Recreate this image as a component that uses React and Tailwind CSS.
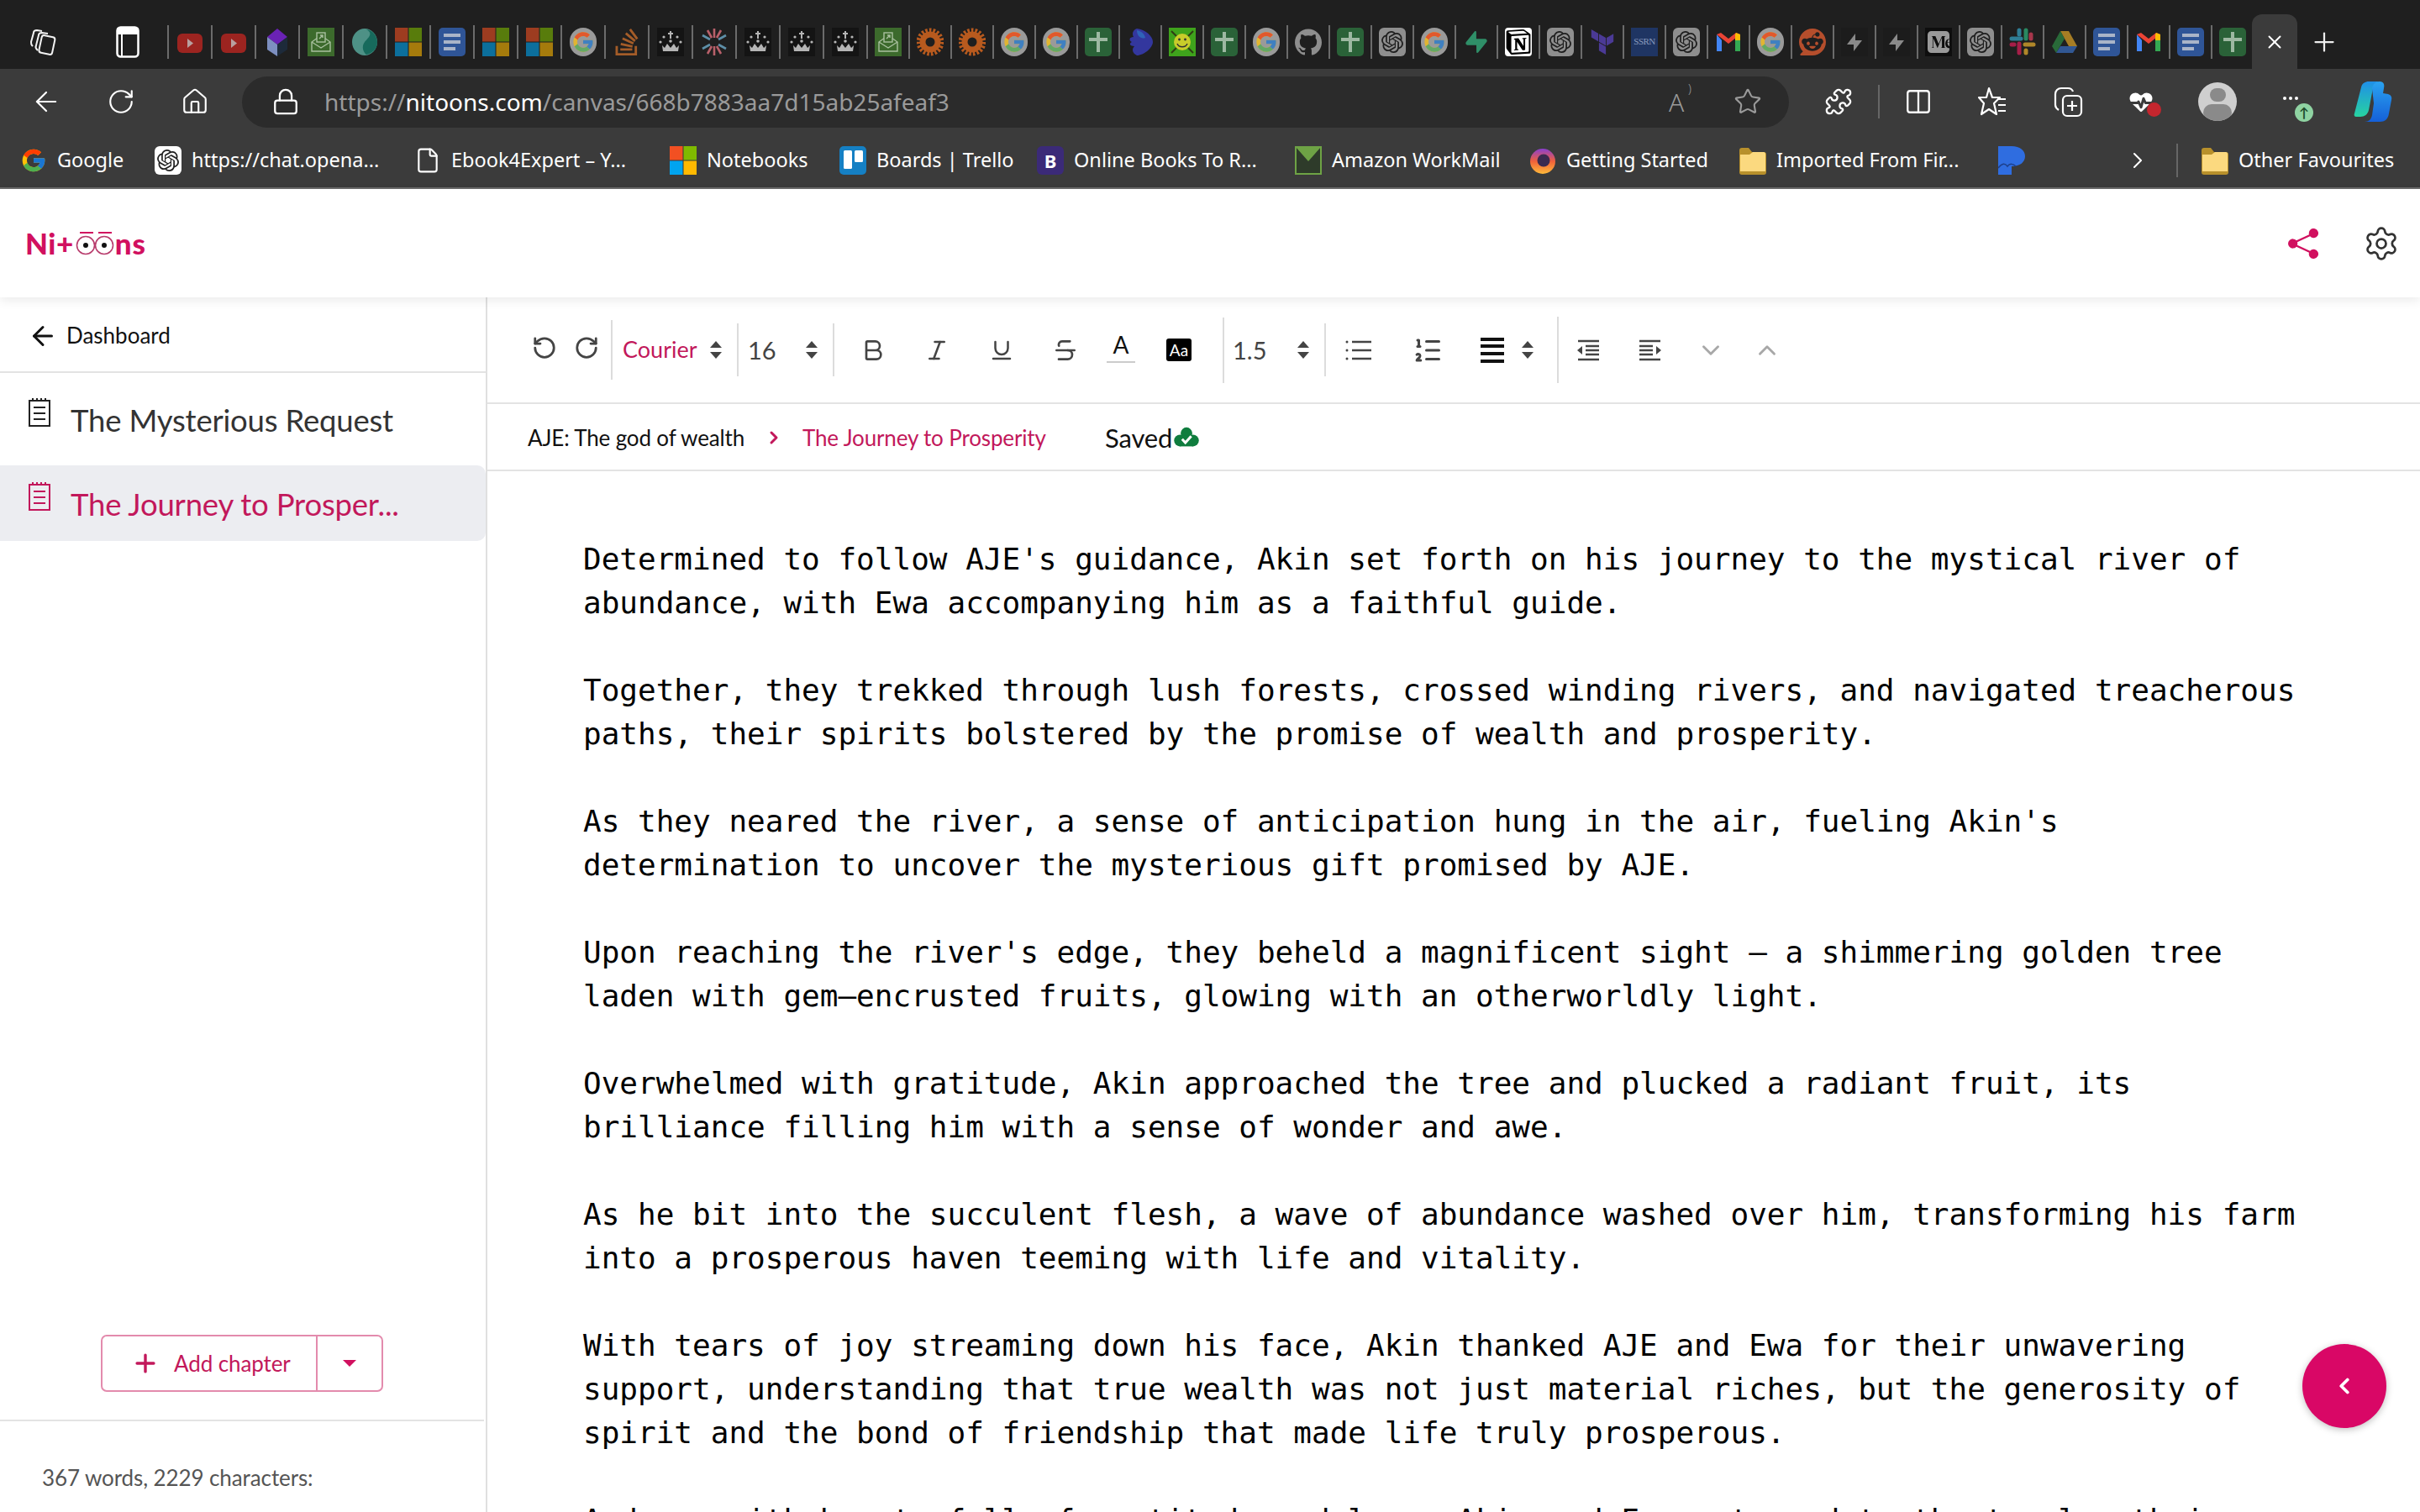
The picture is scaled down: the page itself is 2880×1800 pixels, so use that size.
import React from 'react';
import { ArrowLeft, RotateCw, RotateCcw, House, Lock, Star, Puzzle, Columns2, HeartPulse, ChevronRight, ChevronLeft, ChevronDown, ChevronUp, Bold, Italic, Underline, Strikethrough, Settings, Plus, X, File, ListOrdered } from 'lucide-react';
import { FcGoogle } from 'react-icons/fc';
import { BsShareFill } from 'react-icons/bs';
import { SiOpenai, SiNotion, SiGithub, SiMedium, SiTerraform, SiStackoverflow, SiSupabase, SiReddit } from 'react-icons/si';

const MsGrid = ({ cls = 'w-8 h-[34px]', dim }) => (
  <svg viewBox="0 0 32 34" className={`${cls} ${dim ? 'opacity-60' : ''}`}>
    <rect x="0" y="0" width="15.5" height="16.5" fill="#f25022" />
    <rect x="16.5" y="0" width="15.5" height="16.5" fill="#7fba00" />
    <rect x="0" y="17.5" width="15.5" height="16.5" fill="#00a4ef" />
    <rect x="16.5" y="17.5" width="15.5" height="16.5" fill="#ffb900" />
  </svg>
);

const Docs = () => (
  <svg viewBox="0 0 32 34" className="w-8 h-[34px]">
    <rect width="32" height="34" rx="5" fill="#2f5597" />
    <rect x="6" y="7" width="20" height="4" fill="#a9b4c8" />
    <rect x="6" y="15" width="20" height="4" fill="#a9b4c8" />
    <rect x="6" y="23" width="14" height="4" fill="#a9b4c8" />
  </svg>
);

const Sheets = () => (
  <svg viewBox="0 0 32 34" className="w-8 h-[34px]">
    <rect width="32" height="34" rx="5" fill="#2a6238" />
    <rect x="5" y="12" width="22" height="4" fill="#9db8a2" />
    <rect x="14" y="5" width="4" height="24" fill="#9db8a2" />
  </svg>
);

const MailGreen = () => (
  <svg viewBox="0 0 32 34" className="w-8 h-[34px]">
    <rect width="32" height="34" fill="#3c6a2c" />
    <g fill="none" stroke="#a9c09f" strokeWidth="1.4">
      <path d="M5 17v11h22V17l-11-8z" />
      <path d="M5 17l11 7 11-7" />
      <rect x="11" y="6" width="10" height="11" fill="#3c6a2c" />
      <path d="M14 13l4-4m-3 0h3v3" />
    </g>
  </svg>
);

const Crown = () => (
  <svg viewBox="0 0 32 34" className="w-8 h-[34px]">
    <rect width="32" height="34" fill="#141414" />
    <g fill="#b5b5b5">
      <rect x="15" y="4" width="2" height="9" />
      <rect x="13" y="6" width="6" height="2" />
      <circle cx="8" cy="11" r="1.6" />
      <circle cx="24" cy="11" r="1.6" />
      <circle cx="4" cy="17" r="1.6" />
      <circle cx="28" cy="17" r="1.6" />
      <circle cx="16" cy="16" r="1.8" />
      <path d="M6 21l3 3 3-5 4 5 4-5 3 5 3-3-1 7H7z" />
    </g>
  </svg>
);

const Sun = () => (
  <svg viewBox="0 0 32 34" className="w-8 h-[34px]">
    <circle cx="16" cy="17" r="9" fill="none" stroke="#b85a1e" strokeWidth="7" />
    <circle cx="16" cy="17" r="14" fill="none" stroke="#b85a1e" strokeWidth="5" strokeDasharray="2.6 2" />
  </svg>
);

const Asterisk = () => (
  <svg viewBox="0 0 32 34" className="w-8 h-[34px]" strokeWidth="2.6" fill="none">
    <path d="M16 1v11M16 22v11" stroke="#b8606a" />
    <path d="M2 9l9 5M21 20l9 5" stroke="#5e8fa8" />
    <path d="M30 9l-9 5M11 20l-9 5" stroke="#5e8fa8" />
    <path d="M8 3l5 9M19 22l5 9" stroke="#b8606a" />
    <path d="M24 3l-5 9M13 22l-5 9" stroke="#b8606a" />
  </svg>
);

const Smiley = () => (
  <svg viewBox="0 0 32 34" className="w-8 h-[34px]">
    <rect width="32" height="34" fill="#3fa31c" />
    <path d="M3 4l26 26M29 4L3 30" stroke="#2f3d14" strokeWidth="2" />
    <circle cx="16" cy="17" r="10" fill="#c8cc2a" />
    <circle cx="12.5" cy="14" r="1.4" fill="#333" />
    <circle cx="19.5" cy="14" r="1.4" fill="#333" />
    <path d="M10 19c2 5 10 5 12 0" stroke="#333" strokeWidth="1.5" fill="none" />
  </svg>
);

const Gmail = () => (
  <svg viewBox="0 0 32 34" className="w-8 h-[34px]">
    <path d="M2 8v20h6V15z" fill="#4285f4" />
    <path d="M30 8v20h-6V15z" fill="#34a853" />
    <path d="M2 8l14 11L30 8l-5-2-9 7-9-7z" fill="#ea4335" />
    <path d="M25 6l5 2v7l-6 0V8z" fill="#fbbc04" />
  </svg>
);

const Drive = () => (
  <svg viewBox="0 0 32 34" className="w-8 h-[34px] opacity-70">
    <path d="M11 4h10l10 18H21z" fill="#e0a527" />
    <path d="M11 4L1 22l5 8L16 13z" fill="#2e8b45" />
    <path d="M6 30h20l5-8H11z" fill="#3a6fc4" />
  </svg>
);

const Slack = () => (
  <svg viewBox="0 0 32 34" className="w-8 h-[34px] opacity-70" strokeWidth="5" strokeLinecap="round" fill="none">
    <path d="M3 13h11" stroke="#36a7c9" />
    <path d="M12 3v5" stroke="#36a7c9" />
    <path d="M20 3v10" stroke="#2eb67d" />
    <path d="M26 8v5" stroke="#e0405e" />
    <path d="M19 20h10" stroke="#ecb22e" />
    <path d="M20 27v3" stroke="#ecb22e" />
    <path d="M12 19v11" stroke="#e01e5a" />
    <path d="M3 20h3" stroke="#e01e5a" />
  </svg>
);

const Gem = () => (
  <svg viewBox="0 0 32 34" className="w-8 h-[34px]">
    <path d="M16 1l12 10-12 9L4 11z" fill="#6a22b5" />
    <path d="M4 11l12 9v14L4 26z" fill="#7d8fc0" />
    <path d="M28 11l-12 9v14l12-8z" fill="#1d2a3a" />
  </svg>
);

const Orb = () => (
  <svg viewBox="0 0 32 34" className="w-8 h-[34px]">
    <ellipse cx="16" cy="17" rx="15" ry="16" fill="#4e9186" />
    <path d="M18 2c9 5 2 10-2 15s-2 12 2 15c10-2 13-10 13-15S27 3 18 2z" fill="#176a5c" />
  </svg>
);

const Fish = () => (
  <svg viewBox="0 0 32 34" className="w-8 h-[34px]">
    <path d="M12 1c10 1 19 9 19 16S20 33 12 33C6 30 6 25 9 22 4 22 2 19 6 17 2 15 3 11 8 11 6 7 7 3 12 1z" fill="#33379e" />
    <path d="M12 3c5 1 9 4 10 9-5 2-10-2-10-9z" fill="#2f63b8" />
  </svg>
);

const Ssrn = () => (
  <div className="w-8 h-[34px] bg-[#1f3563] flex items-center justify-center text-[11px] text-[#8a9bbd] font-['Liberation_Serif',serif] leading-none tracking-tighter">SSRN</div>
);

const Youtube = () => (
  <svg viewBox="0 0 32 34" className="w-8 h-[34px]">
    <rect x="1" y="7" width="30" height="23" rx="6" fill="#9c2420" />
    <path d="M13 13l7 5.500-7 5.500z" fill="#b9a0a0" />
  </svg>
);

const Bolt = ({ color = '#8a8a8a' }) => (
  <svg viewBox="0 0 32 34" className="w-8 h-[34px]">
    <path d="M17 7L7 20h8v2l0 6 10-13h-8z" fill={color} />
  </svg>
);

const Grey = ({ children }) => (
  <div className="w-8 h-[34px] rounded-md bg-[#8e8e8e] text-[#1f1f1f] flex items-center justify-center">{children}</div>
);

const OpenAi = () => <Grey><SiOpenai size={26} /></Grey>;
const GoogleDim = () => (
  <div className="w-8 h-[34px] rounded-full bg-[#9a9a9a] flex items-center justify-center"><FcGoogle size={28} className="opacity-70" /></div>
);
const Github = () => <SiGithub size={32} className="text-[#8e8e8e]" />;
const Notion = () => (
  <div className="w-8 h-[34px] bg-white rounded-sm flex items-center justify-center text-black"><SiNotion size={30} /></div>
);
const Stack = () => <SiStackoverflow size={32} className="text-[#a45c28]" />;
const Supa = () => <SiSupabase size={26} className="text-[#2f8f68]" />;
const Terra = () => <SiTerraform size={30} className="text-[#4b3a96]" />;
const Reddit = () => <SiReddit size={32} className="text-[#b54e2c]" />;
const Medium = () => (
  <div className="w-8 h-[34px] bg-[#0e0e0e] flex items-center justify-center text-[#9a9a9a]"><SiMedium size={26} /></div>
);
const BoltBox = () => (
  <div className="w-8 h-[34px] bg-[#1c1c1c]"><Bolt /></div>
);

const TAB_ICONS = [
  Youtube, Youtube, Gem, MailGreen, Orb, () => <MsGrid dim />, Docs, () => <MsGrid dim />, () => <MsGrid dim />, GoogleDim,
  Stack, Crown, Asterisk, Crown, Crown, Crown,
];
const TAB_ICONS_NARROW = [
  MailGreen, Sun, Sun, GoogleDim, GoogleDim, Sheets, Fish, Smiley, Sheets, GoogleDim, Github, Sheets, OpenAi, GoogleDim,
  Supa, Notion, OpenAi, Terra, Ssrn, OpenAi, Gmail, GoogleDim, Reddit, BoltBox, BoltBox, Medium, OpenAi, Slack, Drive,
  Docs, Gmail, Docs, Sheets,
];

const TabActionsIcon = () => (
  <svg viewBox="0 0 34 34" className="w-[34px] h-[34px]" fill="none" stroke="#f2f2f2" strokeWidth="2">
    <rect x="14" y="10" width="16" height="21" rx="3" transform="rotate(12 22 20)" />
    <path d="M11 27l-1-1c-1-1-2-3-1-5l3-12c0-2 2-3 4-3l7 1" />
    <path d="M5 22l-1-1c-1-1-1-2-1-4L6 6c0-2 2-3 4-3l6 1" />
  </svg>
);

const VerticalTabsIcon = () => (
  <svg viewBox="0 0 28 38" className="w-7 h-[38px]" fill="none" stroke="#fff" strokeWidth="2.500">
    <rect x="1.500" y="1.500" width="25" height="35" rx="4" />
    <path d="M1.500 6h25" strokeWidth="8" />
    <path d="M7 9v27" strokeWidth="2" />
  </svg>
);

const FavListIcon = () => (
  <svg viewBox="0 0 36 38" className="w-9 h-[38px]" fill="none" stroke="#fff" strokeWidth="2.200">
    <path d="M13 3l4 11h9l-7 7 3 13-9-6-9 6 3-13-6-7h9z" strokeLinejoin="round" />
    <path d="M23 16h10M24 23h9M24 30h9" />
  </svg>
);

const CollectionsIcon = () => (
  <svg viewBox="0 0 36 38" className="w-9 h-[38px]" fill="none" stroke="#fff" strokeWidth="2.200">
    <rect x="12" y="12" width="22" height="24" rx="5" />
    <path d="M23 18v12M17 24h12" />
    <path d="M7 29c-3-2-4-3-4-6V10c0-4 3-7 7-7h8c3 0 5 1 6 4" />
  </svg>
);

const CopilotIcon = () => (
  <svg viewBox="0 0 46 50" className="w-[46px] h-[50px]">
    <defs>
      <linearGradient id="cpA" x1="0" y1="0" x2="0" y2="1">
        <stop offset="0" stopColor="#1f8fe8" />
        <stop offset="1" stopColor="#27d3a0" />
      </linearGradient>
      <linearGradient id="cpB" x1="0" y1="0" x2="0" y2="1">
        <stop offset="0" stopColor="#2aa3f0" />
        <stop offset="1" stopColor="#1560d8" />
      </linearGradient>
    </defs>
    <path d="M9 8c1-5 5-7 9-7h13c-5 1-7 3-8 8l-5 26c-1 5-5 8-10 8H3c-2 0-3-2-2-4z" fill="url(#cpA)" />
    <path d="M22 9c1-5 4-8 9-8 5 0 6 4 5 8l-1 6 6 1c3 1 5 3 4 7l-3 16c-1 7-5 10-11 10H13c5 0 8-3 9-8l2-14z" fill="url(#cpB)" />
  </svg>
);

const Folder = () => (
  <svg viewBox="0 0 32 34" className="w-8 h-[34px]">
    <path d="M0 5c0-2 1-3 3-3h8l4 5h14c2 0 3 1 3 3v21c0 2-1 3-3 3H3c-2 0-3-1-3-3z" fill="#b8902b" />
    <path d="M1 10h11l4-3h13c1 0 2 1 2 2v21H1z" fill="#fbd97f" />
  </svg>
);

const ChatIcon = () => (
  <div className="w-8 h-[34px] rounded-md bg-white text-[#222] flex items-center justify-center"><SiOpenai size={26} /></div>
);

const TrelloIcon = () => (
  <svg viewBox="0 0 32 34" className="w-8 h-[34px]">
    <rect width="32" height="34" rx="5" fill="#1580c4" />
    <rect x="5" y="5" width="10" height="22" rx="1.500" fill="#fff" />
    <rect x="18" y="5" width="10" height="14" rx="1.500" fill="#fff" />
  </svg>
);

const BootBox = () => (
  <div className="w-8 h-[34px] rounded-md bg-[#3b2a78] text-white text-[22px] font-bold flex items-center justify-center leading-none">B</div>
);

const WorkMail = () => (
  <svg viewBox="0 0 32 34" className="w-8 h-[34px]">
    <rect x="1" y="1" width="30" height="32" fill="#2e3b2a" stroke="#6ea345" strokeWidth="2" />
    <path d="M1 1h30L16 18z" fill="#6ea345" />
  </svg>
);

const FirefoxIcon = () => (
  <svg viewBox="0 0 32 34" className="w-8 h-[34px]">
    <defs>
      <linearGradient id="ffA" x1="0" y1="0" x2="0" y2="1">
        <stop offset="0" stopColor="#8a3fd0" />
        <stop offset="0.5" stopColor="#f0603a" />
        <stop offset="1" stopColor="#ffbb3a" />
      </linearGradient>
    </defs>
    <circle cx="16" cy="18" r="15" fill="url(#ffA)" />
    <circle cx="17" cy="17" r="7.500" fill="#3a2a50" />
  </svg>
);

const PaperIcon = () => (
  <svg viewBox="0 0 32 34" className="w-8 h-[34px]">
    <path d="M0 0h16c10 0 16 5 16 12s-6 12-16 12v10H0z" fill="#2f6de0" />
    <path d="M0 26c5-6 8-6 11-2 3-4 7-3 10 0" stroke="#1d3f8a" strokeWidth="1.500" fill="none" />
  </svg>
);

const BOOKMARKS = [
  { w: 'w-[160px]', icon: <FcGoogle size={32} />, text: 'Google' },
  { w: 'w-[309px]', icon: <ChatIcon />, text: 'https://chat.opena...' },
  { w: 'w-[304px]', icon: <File size={32} strokeWidth={1.6} color="#fff" />, text: 'Ebook4Expert – Y...' },
  { w: 'w-[202px]', icon: <MsGrid />, text: 'Notebooks' },
  { w: 'w-[235px]', icon: <TrelloIcon />, text: 'Boards | Trello' },
  { w: 'w-[307px]', icon: <BootBox />, text: 'Online Books To R...' },
  { w: 'w-[279px]', icon: <WorkMail />, text: 'Amazon WorkMail' },
  { w: 'w-[250px]', icon: <FirefoxIcon />, text: 'Getting Started' },
  { w: 'w-[308px]', icon: <Folder />, text: 'Imported From Fir...' },
];

const PARAGRAPHS = [
  ["Determined to follow AJE's guidance, Akin set forth on his journey to the mystical river of", 'abundance, with Ewa accompanying him as a faithful guide.'],
  ['Together, they trekked through lush forests, crossed winding rivers, and navigated treacherous', 'paths, their spirits bolstered by the promise of wealth and prosperity.'],
  ["As they neared the river, a sense of anticipation hung in the air, fueling Akin's", 'determination to uncover the mysterious gift promised by AJE.'],
  ["Upon reaching the river's edge, they beheld a magnificent sight — a shimmering golden tree", 'laden with gem—encrusted fruits, glowing with an otherworldly light.'],
  ['Overwhelmed with gratitude, Akin approached the tree and plucked a radiant fruit, its', 'brilliance filling him with a sense of wonder and awe.'],
  ['As he bit into the succulent flesh, a wave of abundance washed over him, transforming his farm', 'into a prosperous haven teeming with life and vitality.'],
  ['With tears of joy streaming down his face, Akin thanked AJE and Ewa for their unwavering', 'support, understanding that true wealth was not just material riches, but the generosity of', 'spirit and the bond of friendship that made life truly prosperous.'],
  ['And so, with hearts full of gratitude and love, Akin and Ewa returned to the temple, their'],
];

const Updown = () => (
  <div className="flex flex-col items-center gap-[5px] w-[14px] shrink-0">
    <div className="w-0 h-0 border-l-[7px] border-r-[7px] border-b-[8px] border-l-transparent border-r-transparent border-b-[#444]" />
    <div className="w-0 h-0 border-l-[7px] border-r-[7px] border-t-[8px] border-l-transparent border-r-transparent border-t-[#444]" />
  </div>
);

const BulletsIcon = () => (
  <svg viewBox="0 0 32 26" className="w-8 h-[26px]" stroke="#444" strokeWidth="2.500">
    <path d="M8 3h23M8 13h23M8 23h23" />
    <circle cx="2" cy="3" r="1.500" fill="#444" stroke="none" />
    <circle cx="2" cy="13" r="1.500" fill="#444" stroke="none" />
    <circle cx="2" cy="23" r="1.500" fill="#444" stroke="none" />
  </svg>
);

const JustifyIcon = () => (
  <svg viewBox="0 0 28 30" className="w-7 h-[30px]" stroke="#111" strokeWidth="4">
    <path d="M0 2h28M0 10h28M0 19h28M0 28h28" />
  </svg>
);

const OutdentIcon = ({ flip }) => (
  <svg viewBox="0 0 28 26" className={`w-7 h-[26px] ${flip ? '-scale-x-100' : ''}`} stroke="#444" strokeWidth="2.500" fill="none">
    <path d="M2 2h25M2 24h25M11 8h16M11 13h16M11 18h16" />
    <path d="M7 8l-6 5 6 5z" fill="#444" stroke="none" />
  </svg>
);

const CloudCheck = () => (
  <svg viewBox="0 0 34 30" className="w-[34px] h-[26px]">
    <g fill="#0f7d3e">
      <circle cx="17" cy="9" r="8" />
      <circle cx="8" cy="19" r="8" />
      <circle cx="26" cy="19" r="8" />
      <rect x="8" y="12" width="18" height="15" />
    </g>
    <path d="M11 17l4.500 5 8-9" stroke="#fff" strokeWidth="3.500" fill="none" />
  </svg>
);

const NoteIcon = ({ cls }) => (
  <svg viewBox="0 0 26 34" className={`w-[26px] h-[34px] ${cls}`} fill="none" stroke="currentColor" strokeWidth="2">
    <rect x="1" y="3" width="24" height="30" />
    <path d="M6 11h14M6 18h14M6 25h14" />
    <path d="M5 0v3M10 0v3M15 0v3M20 0v3" />
  </svg>
);

const Logo = () => (
  <div className="flex items-center text-[#d1105f] text-[35px] font-black leading-none font-['Lato',sans-serif] h-[38px]">
    <span className="tracking-[0.5px]">Ni+</span>
    <svg viewBox="0 0 46 30" className="w-[48px] h-[30px] ml-[1px]" fill="none" stroke="#b83d6d" strokeWidth="1.600">
      <path d="M5 2h16M27 2h16" strokeWidth="2" stroke="#d1105f" />
      <circle cx="12" cy="17" r="10.500" />
      <circle cx="34" cy="17" r="10.500" />
      <circle cx="12" cy="17" r="3" fill="#111" stroke="none" />
      <circle cx="34" cy="17" r="3" fill="#111" stroke="none" />
    </svg>
    <span className="tracking-[1px]">ns</span>
  </div>
);

export default function App() {
  return (
    <div className="relative w-[2880px] h-[1800px] overflow-hidden bg-white flex flex-col font-['Lato',sans-serif]">
      {/* browser tab strip */}
      <div className="h-[82px] pt-[17px] bg-[#1f1f1f] flex items-center shrink-0">
        <div className="w-[199px] flex items-center pl-[34px] shrink-0">
          <TabActionsIcon />
          <div className="ml-[70px]"><VerticalTabsIcon /></div>
        </div>
        {TAB_ICONS.map((Icon, i) => (
          <div key={i} className="w-[52px] h-[40px] border-l-2 border-[#6b6b6b] flex items-center justify-center shrink-0">
            <Icon />
          </div>
        ))}
        {TAB_ICONS_NARROW.map((Icon, i) => (
          <div key={i} className="w-[50px] h-[40px] border-l-2 border-[#6b6b6b] flex items-center justify-center shrink-0">
            <Icon />
          </div>
        ))}
        <div className="self-end w-[54px] h-[65px] bg-[#3b3b3b] rounded-t-[12px] flex items-center justify-center shrink-0 -ml-[1px]">
          <X size={26} color="#fff" strokeWidth={1.8} />
        </div>
        <div className="ml-[14px]"><Plus size={36} color="#eee" strokeWidth={1.5} /></div>
      </div>

      {/* address row */}
      <div className="h-[78px] bg-[#3b3b3b] flex items-center shrink-0 pl-[30px] text-white">
        <div className="w-[50px] flex justify-center"><ArrowLeft size={38} strokeWidth={1.4} /></div>
        <div className="w-[50px] ml-[39px] flex justify-center"><RotateCw size={34} strokeWidth={1.5} /></div>
        <div className="w-[50px] ml-[38px] flex justify-center"><House size={34} strokeWidth={1.5} /></div>
        <div className="ml-[31px] w-[1841px] h-[61px] rounded-full bg-[#2b2b2b] flex items-center pl-[34px] pr-[29px]">
          <Lock size={34} strokeWidth={1.6} className="w-9" />
          <div className="ml-[28px] flex-1 text-[28px] leading-none text-[#9a9a9a] font-['Noto_Sans',sans-serif]">
            https://<span className="text-white">nitoons.com</span>/canvas/668b7883aa7d15ab25afeaf3
          </div>
          <div className="w-[40px] flex justify-center items-center text-[#9a9a9a] text-[30px] font-light font-['Noto_Sans',sans-serif] relative">
            A
            <span className="absolute -top-[4px] right-[2px] text-[14px]">)</span>
          </div>
          <div className="w-[40px] ml-[45px] flex justify-center text-[#9a9a9a]"><Star size={34} strokeWidth={1.5} /></div>
        </div>
        <div className="w-[40px] ml-[39px] flex justify-center"><Puzzle size={34} strokeWidth={1.6} /></div>
        <div className="w-[2px] h-[40px] ml-[27px] bg-[#666]" />
        <div className="w-[40px] ml-[26px] flex justify-center"><Columns2 size={34} strokeWidth={1.6} /></div>
        <div className="w-[40px] ml-[49px] flex justify-center"><FavListIcon /></div>
        <div className="w-[40px] ml-[49px] flex justify-center"><CollectionsIcon /></div>
        <div className="w-[40px] ml-[47px] flex justify-center relative">
          <HeartPulse size={36} strokeWidth={2} fill="#fff" stroke="#3b3b3b" />
          <span className="absolute -right-[4px] bottom-0 w-[17px] h-[17px] rounded-full bg-[#c4262e]" />
        </div>
        <div className="w-[46px] h-[46px] ml-[48px] rounded-full bg-[#cfcfcf] flex flex-col items-center overflow-hidden shrink-0">
          <div className="w-[19px] h-[19px] rounded-full bg-[#8a8a8a] mt-[7px]" />
          <div className="w-[34px] h-[24px] rounded-full bg-[#8a8a8a] mt-[3px]" />
        </div>
        <div className="w-[40px] ml-[51px] flex justify-center relative">
          <div className="flex gap-[3px] -ml-[14px] -mt-[6px]">
            <span className="w-[4px] h-[4px] rounded-full bg-white" />
            <span className="w-[4px] h-[4px] rounded-full bg-white" />
            <span className="w-[4px] h-[4px] rounded-full bg-white" />
          </div>
          <span className="absolute right-0 top-[2px] w-[22px] h-[22px] rounded-full bg-[#8fd3a2] text-[#1e4d2b] text-[16px] font-bold leading-none flex items-center justify-center">↑</span>
        </div>
        <div className="ml-[48px]"><CopilotIcon /></div>
      </div>

      {/* bookmarks */}
      <div className="h-[65px] pb-[2px] bg-[#3b3b3b] border-b-2 border-[#6a6a6a] flex items-center pl-[24px] shrink-0 text-white text-[23.5px] font-['Noto_Sans',sans-serif] leading-none">
        {BOOKMARKS.map(b => (
          <div key={b.text} className={`${b.w} flex items-center gap-[12px] shrink-0`}>
            <div className="w-8 flex justify-center shrink-0">{b.icon}</div>
            <span className="whitespace-nowrap">{b.text}</span>
          </div>
        ))}
        <div className="w-[156px] shrink-0"><PaperIcon /></div>
        <ChevronRight size={32} strokeWidth={1.5} className="shrink-0 -ml-[6px]" />
        <div className="w-[2px] h-[40px] ml-[30px] bg-[#666] shrink-0" />
        <div className="ml-[28px] flex items-center gap-[12px]">
          <Folder />
          <span className="whitespace-nowrap">Other Favourites</span>
        </div>
      </div>

      {/* app header */}
      <div className="h-[129px] bg-white flex items-center justify-between pl-[30px] pr-[24px] shrink-0 relative z-10 shadow-[0_4px_12px_rgba(0,0,0,0.08)]">
        <Logo />
        <div className="flex items-center">
          <BsShareFill size={36} className="text-[#d1105f]" />
          <Settings size={44} strokeWidth={1.5} className="text-[#333] ml-[53px]" />
        </div>
      </div>

      <div className="flex flex-1 min-h-0">
        {/* chapters sidebar */}
        <div className="w-[580px] border-r-2 border-[#e0e0e0] flex flex-col shrink-0">
          <div className="h-[90px] pt-[3px] border-b-2 border-[#e3e3e3] flex items-center pl-[33px] text-[#111] text-[26px]">
            <ArrowLeft size={36} strokeWidth={2} />
            <span className="ml-[10px]">Dashboard</span>
          </div>
          <div className="h-[110px] flex pl-[34px] pt-[30px] text-[#333]">
            <NoteIcon cls="text-[#222]" />
            <span className="ml-[24px] text-[36.5px] leading-none mt-[8px] tracking-[-0.2px]">The Mysterious Request</span>
          </div>
          <div className="h-[90px] w-[578px] bg-[#ecedf1] rounded-r-[10px] flex pl-[34px] pt-[20px] text-[#c2185b]">
            <NoteIcon cls="" />
            <span className="ml-[24px] text-[36.5px] leading-none mt-[8px] tracking-[-0.2px]">The Journey to Prosper...</span>
          </div>
          <div className="flex-1" />
          <div className="flex ml-[120px] w-[336px] h-[68px] border-2 border-[#e38bad] rounded-[7px] text-[#c2185b]">
            <div className="w-[256px] flex items-center pl-[36px] border-r-2 border-[#e38bad] text-[26px]">
              <Plus size={34} strokeWidth={2.4} className="-ml-[2px]" />
              <span className="ml-[17px] tracking-[-0.1px]">Add chapter</span>
            </div>
            <div className="flex-1 flex items-center justify-center">
              <div className="w-0 h-0 border-l-[8px] border-r-[8px] border-t-[8px] border-l-transparent border-r-transparent border-t-[#d1105f]" />
            </div>
          </div>
          <div className="mt-[33px] h-[110px] border-t-2 border-[#e3e3e3] pl-[50px] pt-[54px] text-[#555] text-[26px] tracking-[-0.1px] leading-none w-[576px]">
            367 words, 2229 characters:
          </div>
        </div>

        {/* editor */}
        <div className="flex-1 min-w-0 flex flex-col">
          <div className="h-[127px] border-b-2 border-[#e3e3e3] flex items-center pl-[43px] shrink-0 text-[#444]">
            <div className="w-[50px] flex justify-center -mt-[6px]"><RotateCcw size={30} strokeWidth={2.2} /></div>
            <div className="w-[50px] flex justify-center -mt-[6px]"><RotateCw size={30} strokeWidth={2.2} /></div>
            <div className="w-[2px] h-[71px] ml-[4px] bg-[#dcdcdc]" />
            <div className="w-[148px] flex items-center justify-between pl-[12px] pr-[18px] text-[#c2185b] text-[27px]">
              <span>Courier</span><Updown />
            </div>
            <div className="w-[2px] h-[63px] bg-[#dcdcdc]" />
            <div className="w-[112px] flex items-center justify-between pl-[11px] pr-[18px] text-[#444] text-[29px]">
              <span>16</span><Updown />
            </div>
            <div className="w-[2px] h-[63px] bg-[#dcdcdc]" />
            <div className="w-[76px] ml-[8px] flex justify-center"><Bold size={32} strokeWidth={2} /></div>
            <div className="w-[76px] flex justify-center"><Italic size={30} strokeWidth={2} /></div>
            <div className="w-[76px] ml-[1px] flex justify-center"><Underline size={30} strokeWidth={2} /></div>
            <div className="w-[76px] flex justify-center"><Strikethrough size={32} strokeWidth={2} /></div>
            <div className="w-[56px] flex flex-col items-center text-[#111] text-[28px] leading-none -mt-[6px]">
              <span>A</span>
              <div className="w-[34px] h-[2px] mt-[6px] bg-[#ccc]" />
            </div>
            <div className="w-[82px] flex justify-center">
              <div className="w-[30px] h-[27px] bg-black rounded-[3px] text-white text-[19px] leading-none flex items-center justify-center">Aa</div>
            </div>
            <div className="w-[2px] h-[78px] ml-[11px] bg-[#dcdcdc]" />
            <div className="w-[119px] flex items-center justify-between pl-[10px] pr-[18px] text-[#444] text-[29px]">
              <span>1.5</span><Updown />
            </div>
            <div className="w-[2px] h-[63px] bg-[#dcdcdc]" />
            <div className="w-[78px] flex justify-center"><BulletsIcon /></div>
            <div className="w-[86px] flex justify-center"><ListOrdered size={36} strokeWidth={2} /></div>
            <div className="w-[68px] flex justify-center"><JustifyIcon /></div>
            <div className="w-[16px] flex justify-center"><Updown /></div>
            <div className="w-[2px] h-[79px] ml-[27px] bg-[#dcdcdc]" />
            <div className="w-[70px] flex justify-center"><OutdentIcon /></div>
            <div className="w-[78px] flex justify-center"><OutdentIcon flip /></div>
            <div className="w-[66px] flex justify-center text-[#a8a8a8]"><ChevronDown size={34} strokeWidth={2} /></div>
            <div className="w-[68px] flex justify-center text-[#a8a8a8]"><ChevronUp size={34} strokeWidth={2} /></div>
          </div>

          <div className="h-[80px] pt-[2px] border-b-2 border-[#e3e3e3] flex items-center pl-[48px] shrink-0 text-[26px] tracking-[-0.15px]">
            <div className="w-[275px] text-[#111] whitespace-nowrap">AJE: The god of wealth</div>
            <div className="w-[36px] flex justify-center text-[#c2185b]"><ChevronRight size={24} strokeWidth={3} /></div>
            <div className="ml-[16px] w-[360px] text-[#c2185b] whitespace-nowrap">The Journey to Prosperity</div>
            <div className="text-[#111] text-[31px] leading-none">Saved</div>
            <CloudCheck />
          </div>

          <div className="flex-1 min-h-0 pl-[114px] pt-[79px] font-['DejaVu_Sans_Mono',monospace] text-[36px] leading-[52px] text-black whitespace-pre">
            {PARAGRAPHS.map((lines, i) => (
              <div key={i} className="mb-[52px]">
                {lines.map(l => <div key={l}>{l}</div>)}
              </div>
            ))}
          </div>
        </div>
      </div>

      {/* floating toggle */}
      <div className="absolute left-[2740px] top-[1600px] w-[100px] h-[100px] rounded-full bg-[#d90766] shadow-[0_2px_8px_rgba(0,0,0,0.25)] flex items-center justify-center text-white">
        <ChevronLeft size={30} strokeWidth={3} />
      </div>
    </div>
  );
}
